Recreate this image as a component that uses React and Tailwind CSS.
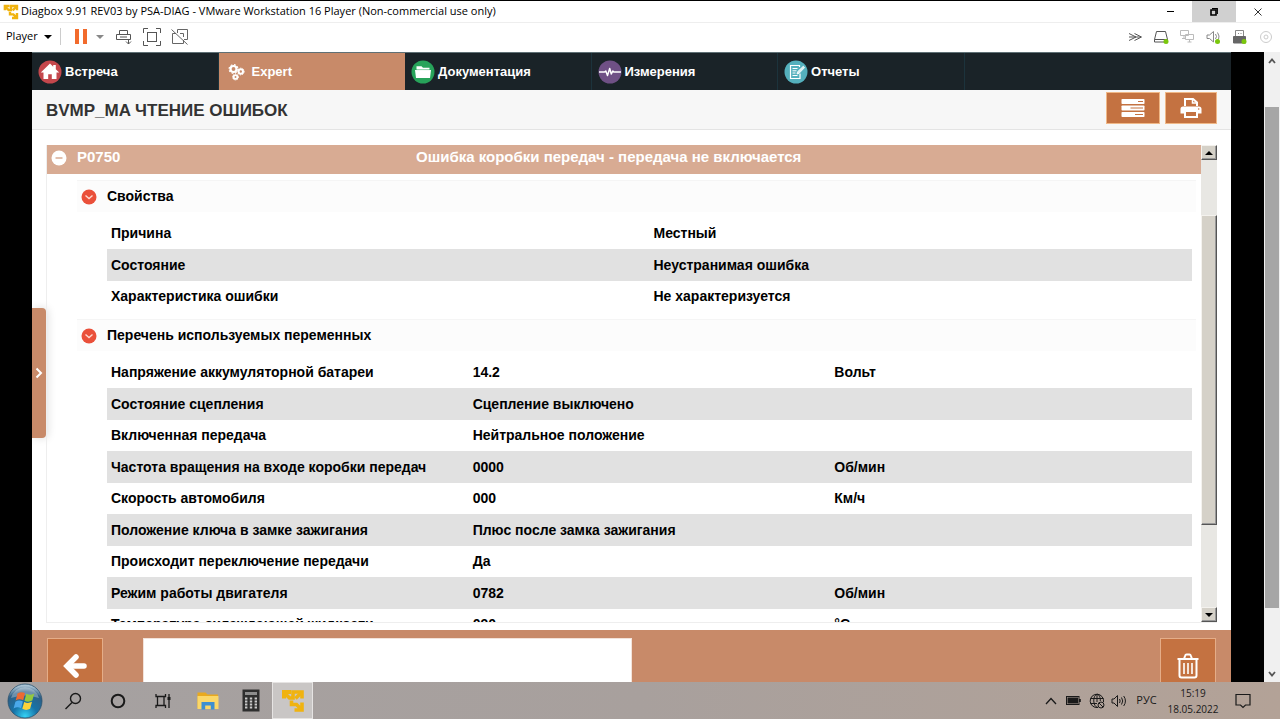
import { useState } from "react";

const TABS = [
  { label: "Встреча", icon: HomeIcon },
  { label: "Expert", icon: GearsIcon, active: true },
  { label: "Документация", icon: FolderIcon },
  { label: "Измерения", icon: PulseIcon },
  { label: "Отчеты", icon: ReportIcon },
];

const PROPERTIES = [
  ["Причина", "Местный"],
  ["Состояние", "Неустранимая ошибка"],
  ["Характеристика ошибки", "Не характеризуется"],
];

const VARIABLES = [
  ["Напряжение аккумуляторной батареи", "14.2", "Вольт"],
  ["Состояние сцепления", "Сцепление выключено", ""],
  ["Включенная передача", "Нейтральное положение", ""],
  ["Частота вращения на входе коробки передач", "0000", "Об/мин"],
  ["Скорость автомобиля", "000", "Км/ч"],
  ["Положение ключа в замке зажигания", "Плюс после замка зажигания", ""],
  ["Происходит переключение передачи", "Да", ""],
  ["Режим работы двигателя", "0782", "Об/мин"],
  ["Температура охлаждающей жидкости", "090", "°C"],
];

/* ---------- Diagbox icons ---------- */

function HomeIcon() {
  return (
    <svg width="24" height="24" viewBox="0 0 24 24">
      <circle cx="12" cy="12" r="11.5" fill="#c4474c" />
      <path
        d="M12 3.500 2.800 12.500h2.700V19h4.700v-4.800h3.600V19h4.700v-6.500h2.700L17.800 9.200V5h-2.600v1.700z"
        fill="#fff"
      />
    </svg>
  );
}

function GearsIcon() {
  return (
    <svg width="24" height="24" viewBox="0 0 24 24" fill="none" stroke="#fff">
      <circle cx="8.500" cy="9" r="3" strokeWidth="2.200" />
      <circle cx="8.500" cy="9" r="4.400" strokeWidth="1.200" strokeDasharray="1.700 1.750" />
      <circle cx="15.800" cy="11.500" r="2.200" strokeWidth="2" />
      <circle cx="15.800" cy="11.500" r="3.400" strokeWidth="1" strokeDasharray="1.200 1.300" />
      <circle cx="10.500" cy="17" r="1.900" strokeWidth="1.900" />
      <circle cx="10.500" cy="17" r="3" strokeWidth="1" strokeDasharray="1.100 1.100" />
    </svg>
  );
}

function FolderIcon() {
  return (
    <svg width="24" height="24" viewBox="0 0 24 24">
      <circle cx="12" cy="12" r="11.5" fill="#27a35a" />
      <path d="M5.500 6.200h5l1.500 1.500h6.500v2.300h-13z" fill="#fff" />
      <path d="M4 10h16l-1 8H5z" fill="#fff" />
      <path d="M5 9.600h14" stroke="#27a35a" strokeWidth=".5" />
    </svg>
  );
}

function PulseIcon() {
  return (
    <svg width="24" height="24" viewBox="0 0 24 24">
      <circle cx="12" cy="12" r="11.5" fill="#6f5085" />
      <path
        d="M1 12h5.500l1.300-1L9.500 15.500 11.700 8.500 13.300 14l1.500-3 1 1H23"
        fill="none"
        stroke="#fff"
        strokeWidth="1.500"
        strokeLinejoin="round"
      />
    </svg>
  );
}

function ReportIcon() {
  return (
    <svg width="24" height="24" viewBox="0 0 24 24">
      <circle cx="12" cy="12" r="11.5" fill="#54b0bd" />
      <g fill="none" stroke="#fff" strokeWidth="1.200">
        <path d="M15.500 7V5.500h-9v13h9.500v-5" />
        <path d="M8.500 8.500h5M8.500 10.800h4M8.500 13h3M8.500 15.500h5" strokeWidth="1" />
        <path d="m13 14 .5-2.200 5.800-5.600 1.300 1.400-5.600 5.800z" fill="#d9f0f3" strokeWidth=".8" />
      </g>
    </svg>
  );
}

function TasksIcon() {
  return (
    <svg width="24" height="20" viewBox="0 0 24 20">
      <g fill="#fff">
        <rect x=".5" y="1" width="23" height="5" rx=".8" />
        <rect x=".5" y="7.500" width="23" height="5" rx=".8" />
        <rect x=".5" y="14" width="23" height="5" rx=".8" />
      </g>
      <path d="M17 3.500h5M9.500 10H22M14 16.500h8" stroke="#c47241" strokeWidth="1.200" />
    </svg>
  );
}

function PrinterIcon() {
  return (
    <svg width="22" height="20" viewBox="0 0 22 20">
      <path d="M5 8V1h8l4 3.500V8" fill="none" stroke="#fff" strokeWidth="2" />
      <path d="M12.500 1v4H17" fill="none" stroke="#fff" strokeWidth="1.500" />
      <path d="M.5 15.500V11a2.500 2.500 0 0 1 2.500-2.500h16a2.500 2.500 0 0 1 2.500 2.500v4.500z" fill="#fff" />
      <rect x="5" y="13" width="12" height="6" fill="#c47241" stroke="#fff" strokeWidth="2" />
      <circle cx="18.700" cy="11" r=".8" fill="#c47241" />
    </svg>
  );
}

function BackIcon() {
  return (
    <svg width="24" height="26" viewBox="0 0 24 26" fill="none" stroke="#fff" strokeWidth="5.500">
      <path d="M13 4 4 13l9 9" strokeLinecap="round" />
      <path d="M6 13h15" strokeLinecap="round" />
    </svg>
  );
}

function TrashIcon() {
  return (
    <svg width="24" height="26" viewBox="0 0 24 26" fill="none" stroke="#fff" strokeWidth="2">
      <path d="M1.500 6h21M8 6l1.200-3.500q.3-1 1.300-1h3q1 0 1.300 1L16 6" />
      <path d="M3.500 6v16.500q0 2 2 2h13q2 0 2-2V6" />
      <path d="M8 10v11M12 10v11M16 10v11" strokeWidth="1.600" />
    </svg>
  );
}

function ChevronBadge() {
  return (
    <svg width="16" height="16" viewBox="0 0 16 16" className="shrink-0">
      <circle cx="8" cy="8" r="7.500" fill="#ea503a" />
      <path d="m4.500 6.500 3.500 3 3.500-3" fill="none" stroke="#ffd9d0" strokeWidth="1.400" />
    </svg>
  );
}

/* ---------- VMware icons ---------- */

function VmwareLogo({ className }) {
  return (
    <svg viewBox="0 0 24 24" className={className} fill="none" stroke="#f0b310" strokeWidth="4">
      <path d="M10 3H3v6.500" />
      <path d="M3 3.500 8.500 9H12V3H21v6.500" strokeWidth="3.600" />
      <path d="M14.500 9.500 20.500 3.500" strokeWidth="3.600" />
      <path d="M21 13.500V21h-7.500M20.500 20.500 15.500 15.500H10.500V11.500" strokeWidth="3.600" />
    </svg>
  );
}

function SendKeysIcon() {
  return (
    <svg width="16" height="16" viewBox="0 0 16 16" fill="none" stroke="#555">
      <path d="M3.500 5.500v-4h8v4M.5 5.500h14v5H.5zM4 8h7M12.500 10v5M10 12.500l2.500 2.500 2.500-2.500" />
    </svg>
  );
}

function FullscreenIcon() {
  return (
    <svg width="18" height="18" viewBox="0 0 18 18" fill="none" stroke="#555">
      <path d="M5 .5H.5V5M13 .5h4.500V5M5 17.500H.5V13M13 17.500h4.500V13" />
      <rect x="4.500" y="4.500" width="9" height="9" />
    </svg>
  );
}

function UnityIcon() {
  return (
    <svg width="18" height="16" viewBox="0 0 18 16" fill="none" stroke="#666">
      <path d="M6.500 4V.5h10v10H13M5 4.500H1.500v10h11V11M9 4.500h3.500V8M.5.500l16 15" />
    </svg>
  );
}

function GreenDot({ cx, cy }) {
  return <circle cx={cx} cy={cy} r="2.500" fill="#7ac70c" />;
}

const DEVICES = [
  {
    name: "Скрыть устройства",
    art: <path d="m2 4.500 7 3.500-7 3.500M7.500 4.500l7 3.500-7 3.500M2 8h12" stroke="#555" />,
  },
  {
    name: "Жесткий диск",
    art: (
      <>
        <path d="M3.500 2.500h9l2 8v2.500h-13v-2.500zM1.500 10.500h13" stroke="#555" />
        <GreenDot cx="13" cy="12.500" />
      </>
    ),
  },
  {
    name: "Сетевой адаптер",
    art: <path d="M1.500 1.500h8v5h-8zM6.500 5.500h8v5h-8zM5 6.500v3M3 9.500h3M10.500 10.500V13M8.500 13h4" stroke="#bbb" />,
  },
  {
    name: "Звук",
    art: (
      <>
        <path d="M2 6h2.500l4-3.500V13L4.500 9.500H2zM10.500 5q2 2.500 0 5M12.500 3.500q2.500 3.500 1 7" stroke="#888" />
        <GreenDot cx="12.500" cy="12.500" />
      </>
    ),
  },
  {
    name: "Принтер",
    art: (
      <>
        <path d="M4.500 7V1.500h8V7M7 4.500h1M9.500 4.500h1" stroke="#888" />
        <path d="M2.500 7.500h12V14h-12z" fill="#666" stroke="#666" />
        <GreenDot cx="13" cy="12.500" />
      </>
    ),
  },
  {
    name: "CD/DVD",
    art: (
      <>
        <circle cx="9" cy="8" r="5.500" stroke="#ccc" />
        <circle cx="9" cy="8" r="2" stroke="#ccc" />
      </>
    ),
  },
];

function Caret({ className }) {
  return (
    <svg width="8" height="4" viewBox="0 0 8 4" className={className} fill="currentColor">
      <path d="M0 0h8L4 4z" />
    </svg>
  );
}

function WindowHeader() {
  return (
    <header className="shrink-0 border-t border-black bg-white font-['Open_Sans',sans-serif] text-black">
      <div className="flex h-[21px] items-center">
        <VmwareLogo className="ml-[3px] h-4 w-4 shrink-0" />
        <h1 className="ml-[2px] grow truncate text-[11px]">
          Diagbox 9.91 REV03 by PSA-DIAG - VMware Workstation 16 Player (Non-commercial use only)
        </h1>
        <button aria-label="Свернуть" className="flex h-full w-11 items-center justify-center">
          <span className="h-px w-[7px] bg-black" />
        </button>
        <button aria-label="Восстановить" className="flex h-full w-11 items-center justify-center bg-[#d0d0d0]">
          <svg width="8" height="8" viewBox="0 0 8 8" fill="none" stroke="#000">
            <path d="M1 2h5v5H1z" strokeWidth="1.600" />
            <path d="M2 .7h5.300V6" strokeWidth="1.200" />
          </svg>
        </button>
        <button aria-label="Закрыть" className="flex h-full w-11 items-center justify-center">
          <svg width="8" height="8" viewBox="0 0 8 8" stroke="#333">
            <path d="m.5.500 7 7M7.500.500l-7 7" />
          </svg>
        </button>
      </div>

      <div className="flex h-[30px] items-center border-t border-[#eee] pr-[2px] pb-[2px]">
        <button className="flex items-center gap-[6px] pl-[6px] text-[11px]">
          Player <Caret />
        </button>
        <span className="ml-2 h-[17px] w-px bg-[#ccc]" />
        <button aria-label="Пауза" className="ml-[14px] flex gap-1">
          <span className="h-[15px] w-1 bg-[#f26b2c]" />
          <span className="h-[15px] w-1 bg-[#f26b2c]" />
        </button>
        <button aria-label="Питание" className="ml-[9px] text-[#888]">
          <Caret />
        </button>
        <button aria-label="Ctrl+Alt+Del" className="ml-3">
          <SendKeysIcon />
        </button>
        <button aria-label="Полный экран" className="ml-[11px]">
          <FullscreenIcon />
        </button>
        <button aria-label="Unity" className="ml-[10px]">
          <UnityIcon />
        </button>
        <div className="ml-auto flex">
          {DEVICES.map((d) => (
            <button key={d.name} aria-label={d.name} className="flex w-[26px] justify-center">
              <svg width="16" height="16" viewBox="0 0 16 16" fill="none">
                {d.art}
              </svg>
            </button>
          ))}
        </div>
      </div>
    </header>
  );
}

/* ---------- Diagbox ---------- */

function DataTable({ label, rows }) {
  return (
    <table aria-label={label} className="w-full table-fixed text-left">
      <tbody>
        {rows.map((row) => (
          <tr key={row[0]} className="odd:h-[31px] even:h-8 even:bg-[#e1e1e1]">
            {row.map((cell, i) => (
              <td key={i} className="px-1 py-0 whitespace-nowrap">
                {cell}
              </td>
            ))}
          </tr>
        ))}
      </tbody>
    </table>
  );
}

function Section({ title, children }) {
  const [open, setOpen] = useState(true);

  return (
    <section className="mb-[7px] pr-[5px] pl-[30px]">
      <button
        onClick={() => setOpen(!open)}
        aria-expanded={open}
        className="flex h-8 w-full items-center gap-[10px] border-t border-[#f5f5f5] bg-[#fcfcfc] pl-1 text-left"
      >
        <ChevronBadge />
        <span>{title}</span>
      </button>
      {open && <div className="mt-[6px] mr-1 ml-[30px]">{children}</div>}
    </section>
  );
}

function ClassicScrollbar() {
  const bevel =
    "w-full border border-t-[#f4f2ee] border-l-[#f4f2ee] border-r-[#555] border-b-[#555] bg-[#d5d1c8] shadow-[inset_-1px_-1px_0_#999]";

  return (
    <div className="flex w-4 shrink-0 flex-col bg-[#e8e7e3]">
      <button aria-label="Вверх" className={`${bevel} flex h-[15px] shrink-0 items-center justify-center`}>
        <Caret className="h-1 w-2 rotate-180" />
      </button>
      <div className="grow-[55]" />
      <div className={`${bevel} grow-[310]`} />
      <div className="grow-[82]" />
      <button aria-label="Вниз" className={`${bevel} flex h-[15px] shrink-0 items-center justify-center`}>
        <Caret className="h-1 w-2" />
      </button>
    </div>
  );
}

function Diagbox() {
  return (
    <div className="flex min-w-0 grow flex-col bg-white font-['Liberation_Sans',Arial,sans-serif] font-bold">
      <nav className="h-[38px] shrink-0 border-t border-[#5f7075] bg-[#1a2328]">
        <div className="grid h-full w-7/9 grid-cols-5">
          {TABS.map(({ label, icon: Icon, active }) => (
            <a
              key={label}
              href="#"
              className={
                active
                  ? "flex items-center gap-[3px] bg-[#c88a69] pl-[6px] text-[13px] text-white"
                  : "flex items-center gap-[3px] border-r border-[#1c333c] pl-[6px] text-[13px] text-white"
              }
            >
              <Icon />
              <span className="pt-px">{label}</span>
            </a>
          ))}
        </div>
      </nav>

      <div className="flex h-10 shrink-0 items-start border-b border-[#e4e4e4] bg-[#f7f7f7] pt-[2px] pr-[14px] pl-[14px]">
        <h2 className="grow self-center pt-px text-[17px] text-[#333]">BVMP_MA ЧТЕНИЕ ОШИБОК</h2>
        <button
          aria-label="Список"
          className="mr-[5px] flex h-8 w-[54px] items-center justify-center border border-[#f0b887] bg-[#c47241]"
        >
          <TasksIcon />
        </button>
        <button
          aria-label="Печать"
          className="flex h-8 w-[52px] items-center justify-center border border-[#f0b887] bg-[#c47241]"
        >
          <PrinterIcon />
        </button>
      </div>

      <main className="flex min-h-0 grow">
        <aside className="flex w-[14px] shrink-0 items-center pb-[14px]">
          <button
            aria-label="Открыть панель"
            className="flex h-[130px] w-full items-center justify-center rounded-r-sm bg-[#c88a69] shadow-[2px_0_8px_#0002]"
          >
            <svg width="8" height="12" viewBox="0 0 8 12" fill="none" stroke="#fff" strokeWidth="2">
              <path d="m1.500 1.500 4.500 4.500-4.500 4.500" />
            </svg>
          </button>
        </aside>

        <div className="mt-[15px] mr-[14px] mb-[7px] flex min-w-0 grow border-b border-l border-[#eee]">
          <div className="min-w-0 grow overflow-hidden text-[14px] text-black">
            <button className="flex h-[29px] w-full items-center bg-[#d8ab93] pb-1 pl-1 text-left text-[15px] text-white">
              <svg width="16" height="16" viewBox="0 0 16 16" className="shrink-0">
                <circle cx="8" cy="8" r="7.500" fill="#fff" />
                <path d="M4.500 8h7" stroke="#d8ab93" strokeWidth="1.500" />
              </svg>
              <span className="ml-[10px] w-[339px] shrink-0">P0750</span>
              <span className="truncate">Ошибка коробки передач - передача не включается</span>
            </button>

            <div className="pt-[6px]">
              <Section title="Свойства">
                <DataTable label="Свойства" rows={PROPERTIES} />
              </Section>
              <Section title="Перечень используемых переменных">
                <DataTable label="Перечень используемых переменных" rows={VARIABLES} />
              </Section>
            </div>
          </div>
          <ClassicScrollbar />
        </div>
      </main>

      <footer className="flex h-[52px] shrink-0 items-start overflow-hidden bg-[#c88a69] px-[15px] pt-2">
        <button
          aria-label="Назад"
          className="flex h-14 w-14 shrink-0 items-center justify-center border border-[#e5ad88] bg-[#c47241]"
        >
          <BackIcon />
        </button>
        <input
          type="text"
          readOnly
          aria-label="Сообщение"
          className="ml-10 h-14 w-[489px] border border-[#f3e3da] bg-white px-2"
        />
        <button
          aria-label="Удалить"
          className="ml-auto flex h-14 w-14 shrink-0 items-center justify-center border border-[#e5ad88] bg-[#c47241]"
        >
          <TrashIcon />
        </button>
      </footer>
    </div>
  );
}

function OuterScrollbar() {
  return (
    <div className="flex w-4 shrink-0 flex-col items-center bg-[#f0f0f0] text-[#555]">
      <button aria-label="Прокрутить вверх" className="flex h-[17px] w-full items-center justify-center">
        <svg width="8" height="6" viewBox="0 0 8 6" fill="none" stroke="currentColor" strokeWidth="1.800">
          <path d="m1 5 3-3.500L7 5" />
        </svg>
      </button>
      <div className="grow-[38]" />
      <div className="w-[14px] grow-[501] bg-[#a6a6a6]" />
      <div className="grow-[57]" />
      <button aria-label="Прокрутить вниз" className="flex h-[17px] w-full items-center justify-center">
        <svg width="8" height="6" viewBox="0 0 8 6" fill="none" stroke="currentColor" strokeWidth="1.800">
          <path d="m1 1 3 3.500L7 1" />
        </svg>
      </button>
    </div>
  );
}

/* ---------- Taskbar ---------- */

function StartOrb() {
  return (
    <svg width="36" height="36" viewBox="0 0 36 36">
      <defs>
        <radialGradient id="orb" cx=".5" cy=".95" r=".9">
          <stop offset="0" stopColor="#35d3f5" />
          <stop offset=".4" stopColor="#1673a8" />
          <stop offset=".8" stopColor="#2f5f85" />
          <stop offset="1" stopColor="#a9c3d4" />
        </radialGradient>
      </defs>
      <circle cx="18" cy="18" r="17" fill="url(#orb)" stroke="#27506d" strokeWidth=".8" />
      <path d="M4 15a14.500 14.500 0 0 1 28 0q-14-5-28 0z" fill="#fff" opacity=".3" />
      <path d="M10.500 10.500q4-2.500 7.500-.3l-1.800 7q-3.800-2-7.500.2z" fill="#ec6a33" />
      <path d="M19.300 10.800q3.700 2 8-.3l-2 7q-4 2.200-7.800.2z" fill="#93c93f" />
      <path d="M8.400 18.700q3.700-2.200 7.500-.2l-1.900 6.800q-3.500-2-7.400.3z" fill="#4aa8ea" />
      <path d="M17.200 19q3.700 2 7.800-.2l-1.900 7q-4 2.200-7.800 0z" fill="#fbd33a" />
    </svg>
  );
}

function Taskbar() {
  return (
    <footer className="flex h-[37px] shrink-0 bg-linear-to-r from-[#a5a1a1] via-[#a8a09d] to-[#b3a297] font-['Open_Sans',sans-serif] text-[#1a1a1a]">
      <button aria-label="Пуск" className="flex w-[50px] items-center justify-center">
        <StartOrb />
      </button>
      <button aria-label="Поиск" className="flex w-[45px] items-center justify-center">
        <svg width="18" height="18" viewBox="0 0 18 18" fill="none" stroke="currentColor" strokeWidth="1.400">
          <circle cx="11.500" cy="6.500" r="5" />
          <path d="M8 10.500 1.500 17" />
        </svg>
      </button>
      <button aria-label="Кортана" className="flex w-[45px] items-center justify-center">
        <svg width="16" height="16" viewBox="0 0 16 16" fill="none" stroke="currentColor" strokeWidth="2">
          <circle cx="8" cy="8" r="6.300" />
        </svg>
      </button>
      <button aria-label="Представление задач" className="flex w-[45px] items-center justify-center">
        <svg width="16" height="16" viewBox="0 0 16 16" fill="none" stroke="currentColor" strokeWidth="1.300">
          <path d="M1 1v2.500h9.500V1M1 15v-2.500h9.500V15M2.500 3.500v9M9 3.500v9M14 1v14" />
          <path d="M12.500 5.500h3" strokeWidth="3" />
        </svg>
      </button>
      <button aria-label="Проводник" className="flex w-[45px] items-center justify-center">
        <svg width="22" height="19" viewBox="0 0 22 19">
          <path d="M.5 1.500h8l2 2h10.500V17H.5z" fill="#e9a91e" />
          <path d="M.5 5h21v13H.5z" fill="#fbd768" />
          <path d="M4.500 18.500V11h13v7.500h-3.700v-4h-5.600v4z" fill="#3d8fd1" />
        </svg>
      </button>
      <button aria-label="Калькулятор" className="flex w-[42px] items-center justify-center">
        <svg width="18" height="23" viewBox="0 0 18 23">
          <rect x=".5" y=".5" width="17" height="22" fill="#2e2e2e" />
          <rect x="3" y="3" width="12" height="3" fill="#8d8d8d" />
          <path
            d="M3 9.500h12M3 12.500h12M3 15.500h12M3 18.500h12"
            stroke="#c9c9c9"
            strokeWidth="1.800"
            strokeDasharray="2.400 2.400"
          />
        </svg>
      </button>
      <button
        aria-label="VMware Player"
        className="flex w-[41px] items-center justify-center border border-[#e6e4e3] bg-[#c9c6c5]"
      >
        <VmwareLogo className="h-6 w-6" />
      </button>

      <div className="ml-auto flex items-center pr-4">
        <button aria-label="Скрытые значки" className="flex w-[23px] justify-center">
          <svg width="12" height="8" viewBox="0 0 12 8" fill="none" stroke="currentColor" strokeWidth="1.300">
            <path d="m1 7 5-5.500L11 7" />
          </svg>
        </button>
        <button aria-label="Батарея" className="flex w-[23px] justify-center">
          <svg width="15" height="9" viewBox="0 0 15 9">
            <rect x=".5" y=".5" width="12.500" height="8" fill="none" stroke="#1a1a1a" />
            <path d="M1.500 1.500h10.500v6H1.500zM13 3h1.800v3H13z" fill="#1a1a1a" />
          </svg>
        </button>
        <button aria-label="Сеть" className="flex w-[23px] justify-center">
          <svg width="16" height="16" viewBox="0 0 16 16" fill="none" stroke="currentColor">
            <path d="M9 14.500a6.700 6.700 0 1 1 5.500-5.500M9 14.500C3.500 14 3.500 2 8 1.300c2.500 0 3.500 4 3.300 6.700M1.500 5.500h13M1.500 10.500H8M8 1.300V9" />
            <circle cx="12" cy="12" r="3" />
            <path d="m10 10 4 4" />
          </svg>
        </button>
        <button aria-label="Громкость" className="flex w-[21px] justify-center">
          <svg width="16" height="14" viewBox="0 0 16 14" fill="none" stroke="currentColor">
            <path d="M1 5h2l3.500-3.500v11L3 9H1zM8.500 5q1.300 2 0 4M10.500 3.500q2.500 3.500 0 7M12.700 2q3.500 5 0 10" />
          </svg>
        </button>
        <button className="w-[35px] text-center text-[11px]">РУС</button>
        <button className="w-[58px] text-center text-[10px] leading-4 whitespace-nowrap">
          15:19
          <br />
          18.05.2022
        </button>
        <button aria-label="Уведомления" className="flex w-[42px] justify-center">
          <svg width="16" height="16" viewBox="0 0 16 16" fill="none" stroke="currentColor" strokeWidth="1.200">
            <path d="M1 1.500h14v10.500H10.500L8 14.500 5.500 12H1z" />
          </svg>
        </button>
      </div>
    </footer>
  );
}

export default function App() {
  return (
    <div className="flex h-screen flex-col overflow-hidden bg-black">
      <WindowHeader />
      <div className="flex min-h-0 grow">
        <div className="w-8 shrink-0" />
        <Diagbox />
        <div className="w-[33px] shrink-0" />
        <OuterScrollbar />
      </div>
      <Taskbar />
    </div>
  );
}
